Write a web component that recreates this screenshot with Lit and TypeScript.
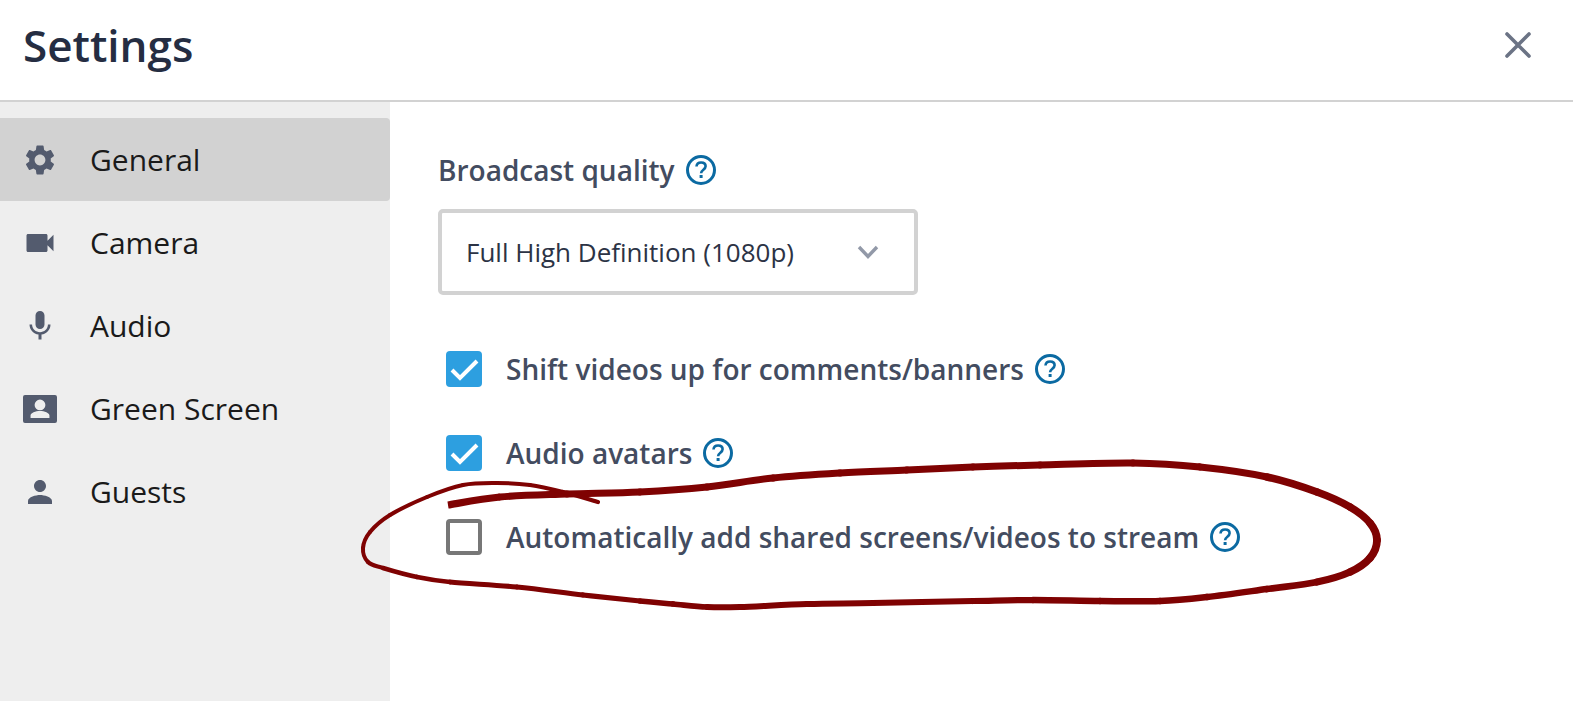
import { LitElement, html, css, svg } from 'lit';
import { customElement, state } from 'lit/decorators.js';

const ICONS: Record<string, string> = {
  general: 'M19.14 12.94c.04-.3.06-.61.06-.94 0-.32-.02-.64-.07-.94l2.03-1.58c.18-.14.23-.41.12-.61l-1.92-3.32c-.12-.22-.37-.29-.59-.22l-2.39.96c-.5-.38-1.03-.7-1.62-.94l-.36-2.54c-.04-.24-.24-.41-.48-.41h-3.84c-.24 0-.43.17-.47.41l-.36 2.54c-.59.24-1.13.57-1.62.94l-2.39-.96c-.22-.08-.47 0-.59.22L2.74 8.87c-.12.21-.08.47.12.61l2.03 1.58c-.05.3-.09.63-.09.94s.02.64.07.94l-2.03 1.58c-.18.14-.23.41-.12.61l1.92 3.32c.12.22.37.29.59.22l2.39-.96c.5.38 1.03.7 1.62.94l.36 2.54c.05.24.24.41.48.41h3.84c.24 0 .44-.17.47-.41l.36-2.54c.59-.24 1.13-.56 1.62-.94l2.39.96c.22.08.47 0 .59-.22l1.92-3.32c.12-.22.07-.47-.12-.61l-2.01-1.58zM12 15.6c-1.98 0-3.6-1.62-3.6-3.6s1.62-3.6 3.6-3.6 3.6 1.62 3.6 3.6-1.62 3.6-3.6 3.6z',
  camera: 'M17 10.5V7c0-.55-.45-1-1-1H4c-.55 0-1 .45-1 1v10c0 .55.45 1 1 1h12c.55 0 1-.45 1-1v-3.5l4 4v-11l-4 4z',
  audio: 'M12 14c1.66 0 2.99-1.34 2.99-3L15 5c0-1.66-1.34-3-3-3S9 3.34 9 5v6c0 1.66 1.34 3 3 3zm5.3-3c0 3-2.54 5.1-5.3 5.1S6.7 14 6.7 11H5c0 3.41 2.72 6.23 6 6.72V21h2v-3.28c3.28-.48 6-3.3 6-6.72h-1.7z',
  green: 'M2 2.67h20a1.33 1.33 0 0 1 1.33 1.33v16a1.33 1.33 0 0 1-1.33 1.33H2A1.33 1.33 0 0 1 .67 20V4A1.33 1.33 0 0 1 2 2.67zM12 5.7a3.6 3.6 0 1 0 0 7.2 3.6 3.6 0 0 0 0-7.2zM12 13.4c-3 0-6.3 1.3-6.3 3v1.6h12.6v-1.6c0-1.7-3.3-3-6.3-3z',
  guests: 'M12 12c2.21 0 4-1.79 4-4s-1.79-4-4-4-4 1.79-4 4 1.79 4 4 4zm0 2c-2.67 0-8 1.34-8 4v2h16v-2c0-2.66-5.33-4-8-4z',
};

const NAV = [
  { id: 'general', label: 'General' },
  { id: 'camera', label: 'Camera' },
  { id: 'audio', label: 'Audio' },
  { id: 'green', label: 'Green Screen' },
  { id: 'guests', label: 'Guests' },
];

const OPTIONS = [
  { label: 'Shift videos up for comments/banners', checked: true },
  { label: 'Audio avatars', checked: true },
  { label: 'Automatically add shared screens/videos to stream', checked: false },
];

// hand drawn ring: x, y, pen width
const INK: number[][] = [
  [448, 505, 7.5], [500, 497, 7], [567, 494, 7], [640, 492, 7], [707, 487, 7], [773, 478, 7],
  [840, 473, 7], [907, 470, 7], [973, 467, 7], [1040, 465, 7], [1133, 463, 7], [1200, 467, 7],
  [1267, 477, 7.5], [1317, 492, 7.5], [1350, 507, 7.5], [1370, 523, 7.5], [1377, 540, 8], [1370, 558, 7.5],
  [1350, 572, 7.5], [1317, 582, 7], [1267, 589, 6.5], [1207, 597, 6.5], [1160, 601, 6.5], [1100, 601, 6.5],
  [1033, 600, 6.5], [973, 601, 6], [873, 603, 6], [807, 604, 6], [740, 607, 6], [707, 607, 6],
  [673, 604, 5.5], [640, 601, 5.5], [583, 595, 5], [517, 587, 5], [450, 582, 5], [417, 577, 4.5],
  [383, 568, 4.5], [368, 562, 4], [363, 548, 4], [370, 532, 4], [390, 515, 4], [427, 497, 4],
  [463, 485, 4], [497, 483, 4], [530, 485, 4], [563, 492, 4], [598, 502, 4.5],
];

// catmull-rom through the ink points, as short pieces so the width can change
function inkPieces(pts: number[][]) {
  const out: { d: string; w: number }[] = [];
  for (let i = 0; i < pts.length - 1; i++) {
    const p0 = pts[Math.max(i - 1, 0)];
    const p1 = pts[i];
    const p2 = pts[i + 1];
    const p3 = pts[Math.min(i + 2, pts.length - 1)];
    const c1x = p1[0] + (p2[0] - p0[0]) / 6;
    const c1y = p1[1] + (p2[1] - p0[1]) / 6;
    const c2x = p2[0] - (p3[0] - p1[0]) / 6;
    const c2y = p2[1] - (p3[1] - p1[1]) / 6;
    out.push({
      d: `M${p1[0]} ${p1[1]}C${c1x} ${c1y} ${c2x} ${c2y} ${p2[0]} ${p2[1]}`,
      w: (p1[2] + p2[2]) / 2,
    });
  }
  return out;
}

@customElement('app-root')
export class AppRoot extends LitElement {
  @state() active = 'general';

  static styles = css`
    :host {
      display: flex;
      flex-direction: column;
      position: relative;
      height: 701px;
      overflow: hidden;
      background: #fff;
      font-family: 'Open Sans', sans-serif;
    }
    .header {
      height: 100px;
      flex: none;
      box-sizing: content-box;
      display: flex;
      align-items: center;
      justify-content: space-between;
      padding: 0 42px 0 23px;
      border-bottom: 2px solid #d2d2d2;
    }
    .title {
      font-size: 44px;
      line-height: 60px;
      font-weight: 600;
      color: #252d42;
      margin-top: -10px;
    }
    .close {
      width: 26px;
      height: 26px;
      display: block;
      margin-top: -10px;
    }
    .body {
      flex: 1;
      display: flex;
      min-height: 0;
    }
    .sidebar {
      width: 390px;
      flex: none;
      background: #eee;
      padding-top: 16px;
      box-sizing: border-box;
    }
    .nav-item {
      height: 83px;
      display: flex;
      align-items: center;
      gap: 32px;
      padding-left: 22px;
      font-size: 30px;
      color: #1a1a1a;
      border-radius: 0 4px 4px 0;
    }
    .nav-item.active {
      background: #d2d2d2;
    }
    .nav-item svg {
      width: 36px;
      height: 36px;
      fill: #535b6e;
      flex: none;
    }
    .main {
      flex: 1;
      padding: 48px 0 0 48px;
    }
    .field-label {
      display: flex;
      align-items: center;
      gap: 10px;
      height: 40px;
      font-size: 28px;
      font-weight: 600;
      color: #434c60;
    }
    .help {
      width: 32px;
      height: 32px;
      flex: none;
      display: block;
    }
    .select {
      width: 480px;
      height: 86px;
      box-sizing: border-box;
      margin-top: 19px;
      border: 4px solid #d2d2d2;
      border-radius: 5px;
      display: flex;
      align-items: center;
      justify-content: space-between;
      padding: 0 34px 0 24px;
      font-size: 26px;
      color: #2c3345;
    }
    .select svg {
      width: 24px;
      height: 16px;
      display: block;
    }
    .options {
      margin: 56px 0 0 8px;
      display: flex;
      flex-direction: column;
      gap: 48px;
    }
    .option {
      display: flex;
      align-items: center;
      height: 36px;
      font-size: 28px;
      font-weight: 600;
      color: #434c60;
    }
    .check {
      width: 36px;
      height: 36px;
      flex: none;
      box-sizing: border-box;
      margin-right: 24px;
      border: 4px solid #777;
      border-radius: 4px;
    }
    .check.on {
      border: none;
      background: #2d9fe0;
    }
    .check svg {
      width: 36px;
      height: 36px;
      display: block;
    }
    .option .help {
      margin-left: 10px;
    }
    .ink {
      position: absolute;
      left: 0;
      top: 0;
      width: 1573px;
      height: 701px;
      pointer-events: none;
    }
  `;

  private helpIcon() {
    return html`<svg class="help" viewBox="0 0 32 32" fill="none">
      <circle cx="16" cy="16" r="13.5" stroke="#0b6aa2" stroke-width="3"></circle>
      <path d="M11.5 12.5c.2-2.6 2-4 4.6-4 2.7 0 4.5 1.5 4.5 3.8 0 3.4-4.5 3.4-4.5 7" stroke="#0b6aa2" stroke-width="2.6"></path>
      <rect x="14.6" y="21" width="3" height="3" fill="#0b6aa2"></rect>
    </svg>`;
  }

  render() {
    return html`
      <div class="header">
        <div class="title">Settings</div>
        <svg class="close" viewBox="0 0 26 26">
          <path d="M2 2L24 24M24 2L2 24" stroke="#6b7385" stroke-width="3.6" stroke-linecap="round"></path>
        </svg>
      </div>
      <div class="body">
        <div class="sidebar">
          ${NAV.map(item => html`
            <div class="nav-item ${item.id === this.active ? 'active' : ''}" @click=${() => { this.active = item.id; }}>
              <svg viewBox="0 0 24 24"><path fill-rule="evenodd" d=${ICONS[item.id]}></path></svg>
              <span>${item.label}</span>
            </div>
          `)}
        </div>
        <div class="main">
          <div class="field-label">Broadcast quality ${this.helpIcon()}</div>
          <div class="select">
            <span>Full High Definition (1080p)</span>
            <svg viewBox="0 0 24 16">
              <path d="M3 3L12 12.5L21 3" fill="none" stroke="#9299a8" stroke-width="3.4"></path>
            </svg>
          </div>
          <div class="options">
            ${OPTIONS.map(opt => html`
              <div class="option">
                <div class="check ${opt.checked ? 'on' : ''}">
                  ${opt.checked ? html`<svg viewBox="0 0 36 36">
                    <path d="M6 19L14 27L31 10" fill="none" stroke="#fff" stroke-width="4"></path>
                  </svg>` : ''}
                </div>
                <span>${opt.label}</span>
                ${this.helpIcon()}
              </div>
            `)}
          </div>
        </div>
      </div>
      <svg class="ink" viewBox="0 0 1573 701" fill="none">
        ${inkPieces(INK).map((s, i) => svg`<path d=${s.d} stroke="#7f0202" stroke-width=${s.w} stroke-linecap=${i === 0 ? 'butt' : 'round'}></path>`)}
      </svg>
    `;
  }
}
